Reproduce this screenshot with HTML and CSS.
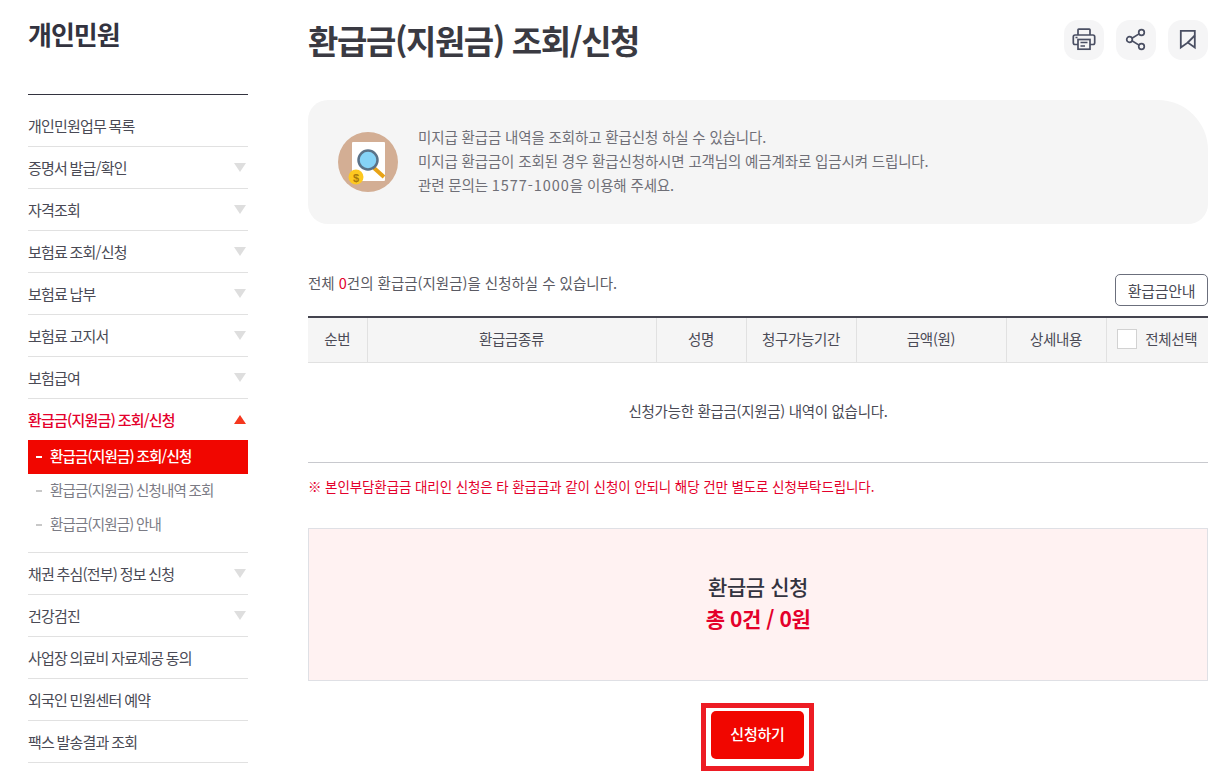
FILE: index.html
```html
<!DOCTYPE html>
<html lang="ko">
<head>
<meta charset="utf-8">
<title>환급금(지원금) 조회/신청</title>
<link rel="stylesheet" href="styles.css">
</head>
<body>
<div class="page">
  <aside class="side">
    <h2 class="side-title">개인민원</h2>
    <ul class="nav">
      <li class="nav-item"><a>개인민원업무 목록</a></li>
      <li class="nav-item has-sub"><a>증명서 발급/확인</a></li>
      <li class="nav-item has-sub"><a>자격조회</a></li>
      <li class="nav-item has-sub"><a>보험료 조회/신청</a></li>
      <li class="nav-item has-sub"><a>보험료 납부</a></li>
      <li class="nav-item has-sub"><a>보험료 고지서</a></li>
      <li class="nav-item has-sub"><a>보험급여</a></li>
      <li class="nav-item has-sub open"><a>환급금(지원금) 조회/신청</a>
        <ul class="subnav">
          <li class="sub-item current">환급금(지원금) 조회/신청</li>
          <li class="sub-item">환급금(지원금) 신청내역 조회</li>
          <li class="sub-item">환급금(지원금) 안내</li>
        </ul>
      </li>
      <li class="nav-item has-sub"><a>채권 추심(전부) 정보 신청</a></li>
      <li class="nav-item has-sub"><a>건강검진</a></li>
      <li class="nav-item"><a>사업장 의료비 자료제공 동의</a></li>
      <li class="nav-item"><a>외국인 민원센터 예약</a></li>
      <li class="nav-item"><a>팩스 발송결과 조회</a></li>
    </ul>
  </aside>
  <main class="main">
    <header class="head">
      <h1 class="title">환급금(지원금) 조회/신청</h1>
      <div class="tools">
        <button class="tool" aria-label="인쇄"><svg width="24" height="24" viewBox="0 0 24 24" fill="none" stroke="#4a4f63" stroke-width="1.7"><path d="M6 7V1.800q0-.7.7-.7h10.600q.7 0 .7.7V7"/><path d="M6 16.500H3q-1.700 0-1.700-1.700V8.800q0-1.800 1.800-1.800h17.800q1.800 0 1.800 1.800v6q0 1.700-1.700 1.700H18"/><rect x="6" y="11.500" width="12" height="9.700"/><path d="M8.500 14.500h7M8.500 18h4.500M3.500 9.500h2"/></svg></button>
        <button class="tool" aria-label="공유"><svg width="24" height="24" viewBox="0 0 24 24" fill="none" stroke="#4a4f63" stroke-width="1.700"><circle cx="5.500" cy="11.500" r="2.800"/><circle cx="17.500" cy="4.500" r="2.800"/><circle cx="17.500" cy="18.500" r="2.800"/><path d="M8 10.200 15 5.900M8 12.800l7 4.300"/></svg></button>
        <button class="tool" aria-label="북마크"><svg width="24" height="24" viewBox="0 0 24 24" fill="none" stroke="#4a4f63" stroke-width="1.800"><path d="M4.800 19.500V2.800h14v16.700l-7-5z"/><path d="M18.800 7.500l-7 7"/></svg></button>
      </div>
    </header>

    <section class="notice">
      <svg class="notice-icon" width="60" height="60" viewBox="0 0 60 60">
        <circle cx="30" cy="30" r="30" fill="#d3ae94"/>
        <rect x="14" y="10" width="33" height="39" rx="1" fill="#fff"/>
        <path d="M36 36l10 9" stroke="#e8a317" stroke-width="4"/>
        <circle cx="30" cy="28" r="9.500" fill="#86d3f7" stroke="#5b7288" stroke-width="2.500"/>
        <circle cx="18" cy="45" r="7.500" fill="#fdc820"/>
        <text x="18" y="49.500" class="coin">$</text>
      </svg>
      <div class="notice-text">
        <p>미지급 환급금 내역을 조회하고 환급신청 하실 수 있습니다.</p>
        <p>미지급 환급금이 조회된 경우 환급신청하시면 고객님의 예금계좌로 입금시켜 드립니다.</p>
        <p>관련 문의는 <span class="tel">1577-1000</span>을 이용해 주세요.</p>
      </div>
    </section>

    <div class="summary">
      <p class="count">전체 <em>0</em>건의 환급금(지원금)을 신청하실 수 있습니다.</p>
      <button class="guide">환급금안내</button>
    </div>

    <table class="grid">
      <colgroup>
        <col class="c1"><col class="c2"><col class="c3"><col class="c4"><col class="c5"><col class="c6"><col class="c7">
      </colgroup>
      <thead>
        <tr>
          <th>순번</th><th>환급금종류</th><th>성명</th><th>청구가능기간</th><th>금액(원)</th><th>상세내용</th>
          <th><span class="all"><i class="check"></i>전체선택</span></th>
        </tr>
      </thead>
      <tbody>
        <tr><td colspan="7">신청가능한 환급금(지원금) 내역이 없습니다.</td></tr>
      </tbody>
    </table>

    <p class="warn">※ 본인부담환급금 대리인 신청은 타 환급금과 같이 신청이 안되니 해당 건만 별도로 신청부탁드립니다.</p>

    <section class="total">
      <strong class="total-label">환급금 신청</strong>
      <strong class="total-value">총 0건 / 0원</strong>
    </section>

    <div class="actions">
      <span class="highlight"><button class="apply">신청하기</button></span>
    </div>
  </main>
</div>
</body>
</html>
```
FILE: styles.css
```css
* { box-sizing: border-box; }
html, body { margin: 0; height: 777px; overflow: hidden; background: #fff; }
body { font-family: "Noto Sans CJK KR", "Noto Sans", sans-serif; color: #4a4a55; }
h1, h2, p, ul { margin: 0; padding: 0; }
ul { list-style: none; }
button { font-family: inherit; cursor: pointer; }

.page { display: flex; gap: 60px; padding: 0 17px 0 28px; }
.side { width: 220px; flex: none; }
.main { width: 900px; flex: none; }

.side-title { font-size: 26px; line-height: 38px; font-weight: 700; letter-spacing: -1px; color: #33333f; padding-top: 15px; border-bottom: 1px solid #33333f; height: 95px; }
.nav { padding-top: 9px; }
.nav-item { border-bottom: 1px solid #e1e1e1; font-size: 15px; letter-spacing: -0.8px; word-spacing: -0.8px; color: #4a4a55; position: relative; }
.nav-item > a { display: block; height: 41px; line-height: 41px; }
.nav-item:first-child > a { height: 42px; line-height: 43px; }
.has-sub > a::after { content: ""; position: absolute; right: 2px; top: 16px; border-left: 6px solid transparent; border-right: 6px solid transparent; border-top: 9px solid #dedede; }
.open > a { color: #e4002b; font-weight: 500; }
.open > a::after { border-top: 0; border-bottom: 9px solid #f5371e; }
.subnav { padding-bottom: 10px; }
.sub-item { height: 34px; line-height: 32px; padding-left: 22px; font-size: 14.500px; color: #7b7b85; position: relative; }
.sub-item::before { content: ""; position: absolute; left: 8px; top: 16px; width: 6px; height: 2px; background: #c8c8c8; }
.current { background: #f10600; color: #fff; font-weight: 500; }
.current::before { background: #fff; }

.head { display: flex; justify-content: space-between; height: 100px; padding-top: 20px; }
.title { font-size: 33px; line-height: 40px; font-weight: 700; letter-spacing: -1.400px; color: #3a3a42; }
.tools { display: flex; gap: 12px; }
.tool { width: 40px; height: 40px; border: 0; border-radius: 14px; background: #f5f5f6; padding: 0; display: flex; align-items: center; justify-content: center; }

.notice { height: 124px; background: #f5f5f5; border-radius: 20px 50px 20px 20px; display: flex; align-items: center; gap: 20px; padding: 0 0 2px 30px; }
.notice-icon { flex: none; margin-top: 2px; }
.coin { font: 700 11px "Liberation Sans", sans-serif; fill: #a8790c; text-anchor: middle; }
.notice-text { font-size: 14.500px; line-height: 24px; color: #6f6f77; letter-spacing: -0.140px; }
.tel { letter-spacing: 0.950px; }

.summary { display: flex; justify-content: space-between; align-items: flex-start; margin-top: 50px; height: 42px; }
.count { font-size: 14.500px; line-height: 20px; letter-spacing: 0; color: #5a5a63; margin-top: -1px; }
.count em { font-style: normal; color: #e4002b; }
.guide { width: 93px; height: 32px; border: 1px solid #6b6f7c; border-radius: 5px; background: #fff; font-size: 15px; color: #4a4a55; padding: 0; letter-spacing: -0.300px; }

.grid { width: 900px; border-collapse: collapse; table-layout: fixed; border-top: 2px solid #44444f; font-size: 14.500px; letter-spacing: -0.300px; }
.c1 { width: 59px; } .c2 { width: 289px; } .c3 { width: 90px; } .c4 { width: 110px; } .c5 { width: 150px; } .c6 { width: 100px; } .c7 { width: 102px; }
.grid th { height: 45px; background: #f5f5f5; border-bottom: 1px solid #e1e1e1; border-left: 1px solid #e1e1e1; font-weight: 400; padding: 0 0 2px; color: #4a4a55; }
.grid th:first-child { border-left: 0; }
.grid td { height: 100px; text-align: center; border-bottom: 1px solid #c8c9ce; padding: 0 0 3px; color: #4a4a55; }
.all { display: flex; align-items: center; justify-content: center; gap: 8px; white-space: nowrap; }
.check { width: 20px; height: 20px; background: #fff; border: 1px solid #d2d2d2; flex: none; }

.warn { margin-top: 13px; font-size: 13.500px; line-height: 20px; letter-spacing: -0.100px; color: #e4002b; }

.total { margin-top: 32px; height: 153px; background: #fff2f2; border: 1px solid #dfe0e5; display: flex; flex-direction: column; align-items: center; justify-content: center; gap: 2px; line-height: 30px; padding-bottom: 4px; }
.total-label { font-weight: 500; color: #33333f; font-size: 21px; letter-spacing: -0.450px; }
.total-value { font-weight: 700; color: #e4002b; font-size: 21px; letter-spacing: -0.450px; }

.actions { display: flex; justify-content: center; margin-top: 22px; padding-right: 1px; }
.highlight { display: block; border: 5px solid #ed1c24; padding: 3px 5px 7px; height: 68px; width: 113px; }
.apply { display: block; width: 93px; height: 48px; background: #f10600; border: 0; border-radius: 5px; color: #fff; font-size: 15px; font-weight: 500; padding: 0 0 3px; letter-spacing: -0.200px; }
```
